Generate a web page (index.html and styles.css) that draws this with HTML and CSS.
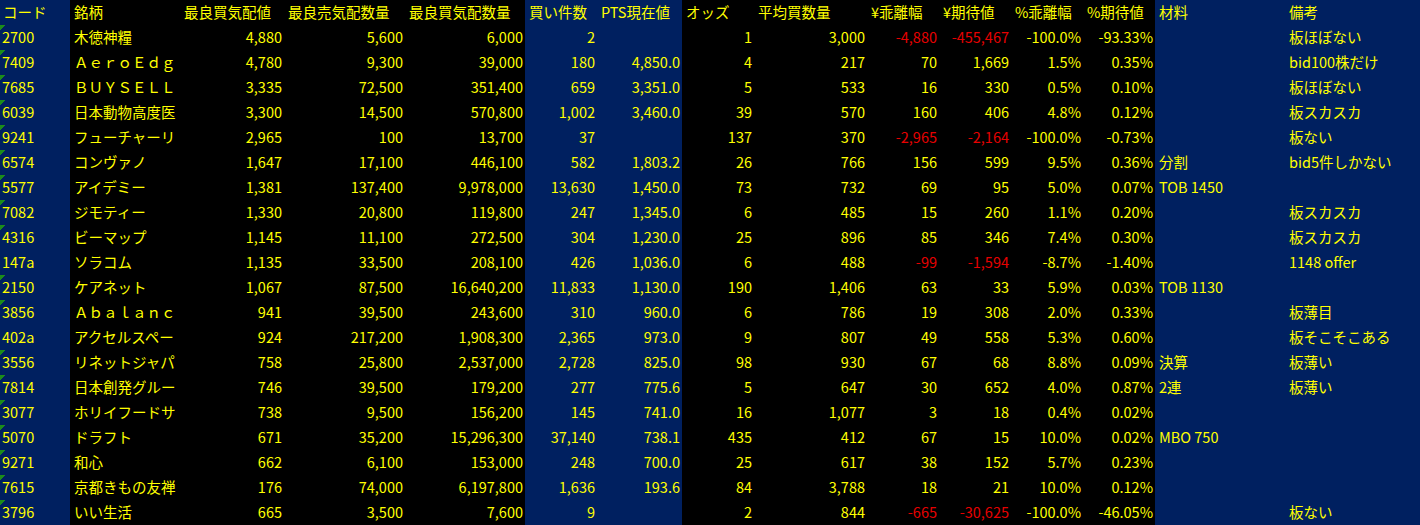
FILE: index.html
```html
<!DOCTYPE html>
<html lang="ja">
<head>
<meta charset="utf-8">
<title>PTS</title>
<link rel="stylesheet" href="styles.css">
</head>
<body>
<table class="sheet">
<colgroup>
<col class="c-code blue"><col class="c-name"><col class="c-bid"><col class="c-askq"><col class="c-bidq">
<col class="c-cnt blue"><col class="c-pts blue"><col class="c-odds"><col class="c-avg"><col class="c-yd">
<col class="c-ye"><col class="c-pd"><col class="c-pe"><col class="c-mat blue"><col class="c-note blue">
</colgroup>
<thead>
<tr><th>コード</th><th>銘柄</th><th>最良買気配値</th><th>最良売気配数量</th><th>最良買気配数量</th><th>買い件数</th><th>PTS現在値</th><th>オッズ</th><th>平均買数量</th><th>¥乖離幅</th><th>¥期待値</th><th>%乖離幅</th><th>%期待値</th><th>材料</th><th>備考</th></tr>
</thead>
<tbody>
<tr><td class="code tri">2700</td><td>木徳神糧</td><td class="n">4,880</td><td class="n">5,600</td><td class="n">6,000</td><td class="n">2</td><td class="n"></td><td class="n">1</td><td class="n">3,000</td><td class="n neg">-4,880</td><td class="n neg">-455,467</td><td class="n">-100.0%</td><td class="n">-93.33%</td><td></td><td>板ほぼない</td></tr>
<tr><td class="code tri">7409</td><td>ＡｅｒｏＥｄｇ</td><td class="n">4,780</td><td class="n">9,300</td><td class="n">39,000</td><td class="n">180</td><td class="n">4,850.0</td><td class="n">4</td><td class="n">217</td><td class="n">70</td><td class="n">1,669</td><td class="n">1.5%</td><td class="n">0.35%</td><td></td><td>bid100株だけ</td></tr>
<tr><td class="code tri">7685</td><td>ＢＵＹＳＥＬＬ</td><td class="n">3,335</td><td class="n">72,500</td><td class="n">351,400</td><td class="n">659</td><td class="n">3,351.0</td><td class="n">5</td><td class="n">533</td><td class="n">16</td><td class="n">330</td><td class="n">0.5%</td><td class="n">0.10%</td><td></td><td>板ほぼない</td></tr>
<tr><td class="code tri">6039</td><td>日本動物高度医</td><td class="n">3,300</td><td class="n">14,500</td><td class="n">570,800</td><td class="n">1,002</td><td class="n">3,460.0</td><td class="n">39</td><td class="n">570</td><td class="n">160</td><td class="n">406</td><td class="n">4.8%</td><td class="n">0.12%</td><td></td><td>板スカスカ</td></tr>
<tr><td class="code tri">9241</td><td>フューチャーリ</td><td class="n">2,965</td><td class="n">100</td><td class="n">13,700</td><td class="n">37</td><td class="n"></td><td class="n">137</td><td class="n">370</td><td class="n neg">-2,965</td><td class="n neg">-2,164</td><td class="n">-100.0%</td><td class="n">-0.73%</td><td></td><td>板ない</td></tr>
<tr><td class="code tri">6574</td><td>コンヴァノ</td><td class="n">1,647</td><td class="n">17,100</td><td class="n">446,100</td><td class="n">582</td><td class="n">1,803.2</td><td class="n">26</td><td class="n">766</td><td class="n">156</td><td class="n">599</td><td class="n">9.5%</td><td class="n">0.36%</td><td>分割</td><td>bid5件しかない</td></tr>
<tr><td class="code tri">5577</td><td>アイデミー</td><td class="n">1,381</td><td class="n">137,400</td><td class="n">9,978,000</td><td class="n">13,630</td><td class="n">1,450.0</td><td class="n">73</td><td class="n">732</td><td class="n">69</td><td class="n">95</td><td class="n">5.0%</td><td class="n">0.07%</td><td>TOB 1450</td><td></td></tr>
<tr><td class="code tri">7082</td><td>ジモティー</td><td class="n">1,330</td><td class="n">20,800</td><td class="n">119,800</td><td class="n">247</td><td class="n">1,345.0</td><td class="n">6</td><td class="n">485</td><td class="n">15</td><td class="n">260</td><td class="n">1.1%</td><td class="n">0.20%</td><td></td><td>板スカスカ</td></tr>
<tr><td class="code tri">4316</td><td>ビーマップ</td><td class="n">1,145</td><td class="n">11,100</td><td class="n">272,500</td><td class="n">304</td><td class="n">1,230.0</td><td class="n">25</td><td class="n">896</td><td class="n">85</td><td class="n">346</td><td class="n">7.4%</td><td class="n">0.30%</td><td></td><td>板スカスカ</td></tr>
<tr><td class="code">147a</td><td>ソラコム</td><td class="n">1,135</td><td class="n">33,500</td><td class="n">208,100</td><td class="n">426</td><td class="n">1,036.0</td><td class="n">6</td><td class="n">488</td><td class="n neg">-99</td><td class="n neg">-1,594</td><td class="n">-8.7%</td><td class="n">-1.40%</td><td></td><td>1148 offer</td></tr>
<tr><td class="code tri">2150</td><td>ケアネット</td><td class="n">1,067</td><td class="n">87,500</td><td class="n">16,640,200</td><td class="n">11,833</td><td class="n">1,130.0</td><td class="n">190</td><td class="n">1,406</td><td class="n">63</td><td class="n">33</td><td class="n">5.9%</td><td class="n">0.03%</td><td>TOB 1130</td><td></td></tr>
<tr><td class="code tri">3856</td><td>Ａｂａｌａｎｃ</td><td class="n">941</td><td class="n">39,500</td><td class="n">243,600</td><td class="n">310</td><td class="n">960.0</td><td class="n">6</td><td class="n">786</td><td class="n">19</td><td class="n">308</td><td class="n">2.0%</td><td class="n">0.33%</td><td></td><td>板薄目</td></tr>
<tr><td class="code">402a</td><td>アクセルスペー</td><td class="n">924</td><td class="n">217,200</td><td class="n">1,908,300</td><td class="n">2,365</td><td class="n">973.0</td><td class="n">9</td><td class="n">807</td><td class="n">49</td><td class="n">558</td><td class="n">5.3%</td><td class="n">0.60%</td><td></td><td>板そこそこある</td></tr>
<tr><td class="code tri">3556</td><td>リネットジャパ</td><td class="n">758</td><td class="n">25,800</td><td class="n">2,537,000</td><td class="n">2,728</td><td class="n">825.0</td><td class="n">98</td><td class="n">930</td><td class="n">67</td><td class="n">68</td><td class="n">8.8%</td><td class="n">0.09%</td><td>決算</td><td>板薄い</td></tr>
<tr><td class="code tri">7814</td><td>日本創発グルー</td><td class="n">746</td><td class="n">39,500</td><td class="n">179,200</td><td class="n">277</td><td class="n">775.6</td><td class="n">5</td><td class="n">647</td><td class="n">30</td><td class="n">652</td><td class="n">4.0%</td><td class="n">0.87%</td><td>2連</td><td>板薄い</td></tr>
<tr><td class="code tri">3077</td><td>ホリイフードサ</td><td class="n">738</td><td class="n">9,500</td><td class="n">156,200</td><td class="n">145</td><td class="n">741.0</td><td class="n">16</td><td class="n">1,077</td><td class="n">3</td><td class="n">18</td><td class="n">0.4%</td><td class="n">0.02%</td><td></td><td></td></tr>
<tr><td class="code tri">5070</td><td>ドラフト</td><td class="n">671</td><td class="n">35,200</td><td class="n">15,296,300</td><td class="n">37,140</td><td class="n">738.1</td><td class="n">435</td><td class="n">412</td><td class="n">67</td><td class="n">15</td><td class="n">10.0%</td><td class="n">0.02%</td><td>MBO 750</td><td></td></tr>
<tr><td class="code tri">9271</td><td>和心</td><td class="n">662</td><td class="n">6,100</td><td class="n">153,000</td><td class="n">248</td><td class="n">700.0</td><td class="n">25</td><td class="n">617</td><td class="n">38</td><td class="n">152</td><td class="n">5.7%</td><td class="n">0.23%</td><td></td><td></td></tr>
<tr><td class="code tri">7615</td><td>京都きもの友禅</td><td class="n">176</td><td class="n">74,000</td><td class="n">6,197,800</td><td class="n">1,636</td><td class="n">193.6</td><td class="n">84</td><td class="n">3,788</td><td class="n">18</td><td class="n">21</td><td class="n">10.0%</td><td class="n">0.12%</td><td></td><td></td></tr>
<tr><td class="code tri">3796</td><td>いい生活</td><td class="n">665</td><td class="n">3,500</td><td class="n">7,600</td><td class="n">9</td><td class="n"></td><td class="n">2</td><td class="n">844</td><td class="n neg">-665</td><td class="n neg">-30,625</td><td class="n">-100.0%</td><td class="n">-46.05%</td><td></td><td>板ない</td></tr>
</tbody>
</table>
</body>
</html>
```
FILE: styles.css
```css
html, body {
  margin: 0;
  padding: 0;
  background: #000;
}

.sheet {
  border-collapse: collapse;
  border-spacing: 0;
  table-layout: fixed;
  width: 1420px;
  font-family: "Noto Sans CJK JP", "Noto Sans", sans-serif;
  font-size: 14.5px;
  color: #ffff00;
}

.sheet tr {
  height: 25px;
}

.sheet th,
.sheet td {
  height: 25px;
  padding: 0 2px 0 4px;
  line-height: 23px;
  vertical-align: top;
  white-space: nowrap;
  overflow: hidden;
  text-align: left;
  font-weight: normal;
  box-sizing: border-box;
  border: 0;
}

.blue { background: #002060; }

.c-code { width: 70px; }
.c-name { width: 110px; }
.c-bid { width: 104px; }
.c-askq { width: 121px; }
.c-bidq { width: 120px; }
.c-cnt { width: 72px; }
.c-pts { width: 85px; }
.c-odds { width: 72px; }
.c-avg { width: 113px; }
.c-yd { width: 72px; }
.c-ye { width: 72px; }
.c-pd { width: 72px; }
.c-pe { width: 72px; }
.c-mat { width: 130px; }
.c-note { width: 135px; }

.sheet .code {
  padding-left: 2px;
}

.sheet th:first-child {
  padding-left: 3px;
}

.sheet .tri {
  background-image: linear-gradient(135deg, #1c8c1c 0, #1c8c1c 3.6px, transparent 3.6px);
  background-size: 6px 6px;
  background-repeat: no-repeat;
  background-position: 0 0;
}

.sheet .n {
  text-align: right;
  padding-right: 2px;
}

.sheet .neg {
  color: #e60000;
}
```
